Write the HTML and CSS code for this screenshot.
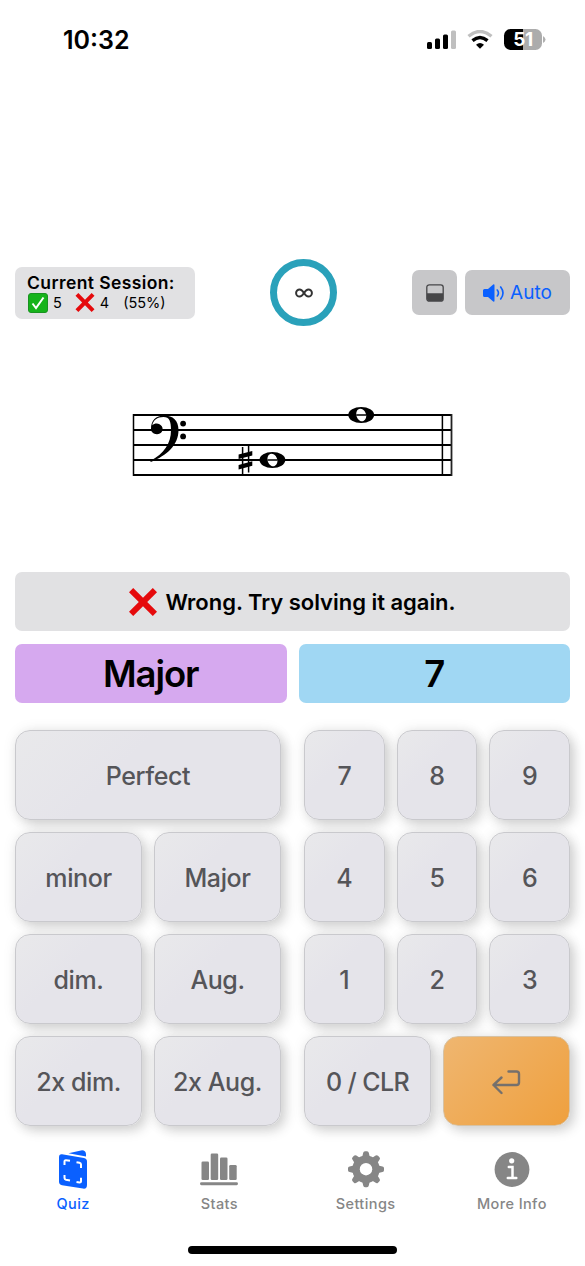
FILE: index.html
```
<!DOCTYPE html>
<html lang="en">
<head>
<meta charset="utf-8">
<title>Interval Quiz</title>
<link rel="stylesheet" href="styles.css">
</head>
<body>
<svg width="0" height="0" class="defs">
  <symbol id="cross" viewBox="0 0 28 28"><path d="M4.2 0 14 9.8 23.8 0 28 4.2 18.2 14 28 23.8 23.8 28 14 18.2 4.2 28 0 23.8 9.8 14 0 4.2z" fill="#e50a0c"/></symbol>
</svg>
<header class="status">
  <span class="time">10:32</span>
  <div class="indicators">
    <svg class="signal" width="30" height="20" viewBox="0 0 30 20">
      <rect x="0" y="12" width="5" height="7" rx="1.5"/><rect x="8" y="8.500" width="5" height="10.500" rx="1.500"/><rect x="16" y="4.500" width="5" height="14.500" rx="1.500"/><rect x="24" y="0.500" width="5" height="18.500" rx="1.500" fill="#bfbfbf"/>
    </svg>
    <svg class="wifi" width="26" height="20" viewBox="0 0 26 20">
      <path d="M1.500 6.300Q13-3.400 24.500 6.300" fill="none" stroke="#bfbfbf" stroke-width="3.300"/>
      <path d="M5.500 10.600Q13 4.400 20.500 10.600" fill="none" stroke="#000" stroke-width="3.400"/>
      <path d="M9 14.700Q13 11.300 17 14.700L13 18.800z"/>
    </svg>
    <div class="battery"><span>51</span></div>
    <svg class="battery-tip" width="3" height="7" viewBox="0 0 3 7"><path d="M0 0Q2.500 1.500 2.500 3.500T0 7z" fill="#b0b0b0"/></svg>
  </div>
</header>

<section class="toolbar">
  <div class="session">
    <strong>Current Session:</strong>
    <div class="scores">
      <svg class="check" width="20" height="20" viewBox="0 0 20 20"><rect x=".5" y=".5" width="19" height="19" rx="2.500" fill="#16b31b" stroke="#199321"/><path d="M4.500 10.500 8 15 15.500 4.500" fill="none" stroke="#fff" stroke-width="2"/></svg>
      <span class="right-count">5</span>
      <svg width="20" height="19"><use href="#cross"/></svg>
      <span class="wrong-count">4</span>
      <span class="ratio">(55%)</span>
    </div>
  </div>
  <div class="ring">
    <svg width="18" height="10" viewBox="0 0 18 10"><path d="M9 5C7.600 2.800 6.500 1.400 4.700 1.400a3.600 3.600 0 0 0 0 7.200C6.500 8.600 7.600 7.200 9 5s2.500-3.600 4.300-3.600a3.600 3.600 0 0 1 0 7.200C11.500 8.600 10.400 7.200 9 5z" fill="none" stroke="#333" stroke-width="2"/></svg>
  </div>
  <div class="tools">
    <button class="tool square" aria-label="Layout"><svg width="18" height="18" viewBox="0 0 18 18"><rect x=".8" y=".8" width="16.400" height="16.400" rx="2.500" fill="none" stroke="#464648" stroke-width="1.300"/><path d="M1 9.200h16V15q0 2-2 2H3q-2 0-2-2z" fill="#464648"/></svg></button>
    <button class="tool audio"><svg width="22" height="18" viewBox="0 0 22 18"><path d="M1.500 5H5l5.200-4.500Q11.500 0 11.500 1.200v15.600q0 1.200-1.300.7L5 13H1.500Q0 13 0 11.500v-5Q0 5 1.500 5z" fill="#0a60ff"/><path d="M14.300 6q2.300 3 0 6M17.700 3q4.600 6 0 12" fill="none" stroke="#0a60ff" stroke-width="1.600" stroke-linecap="round"/></svg><span>Auto</span></button>
  </div>
</section>

<svg class="staff" width="322" height="76" viewBox="132 405 322 76">
  <path d="M133 415H452M133 430H452M133 445H452M133 460H452M133 475H452" stroke="#000" stroke-width="1.900"/>
  <path d="M133.500 414v62M442.400 414v62" stroke="#000" stroke-width="1.500"/>
  <path d="M451.500 414v62" stroke="#222" stroke-width="1.800"/>
  <path d="M151 429C150.800 420.500 156 415.400 164 415.400C173 415.400 178.500 420.500 178.500 430C178.500 445 167 455.500 150.800 462L150.300 461C164 453.500 171 443.500 171 430C171 421.500 169.500 417 163.500 417C157 417 153.500 420 152.300 425.200C154 423.600 157.200 423 159.500 424.300C162.500 425.800 163.400 429.200 162 431.600C160.300 434.500 156.500 435 153.800 433.500C151.800 432.400 151 431 151 429z"/>
  <circle cx="183.100" cy="423.600" r="2.900"/><circle cx="183.100" cy="436.400" r="2.900"/>
  <path d="M242.600 447v27M248.600 445.800v26.700" stroke="#000" stroke-width="1.500"/>
  <path d="M238.600 454.500l13.700-3.600v4.500l-13.700 3.600zM238.600 464.900l13.700-3.600v4.500l-13.700 3.600z"/>
  <g id="whole-note">
    <ellipse cx="272.400" cy="460" rx="12.900" ry="8"/>
    <ellipse cx="272.400" cy="460" rx="4.800" ry="6.400" fill="#fff" transform="rotate(-20 272.400 460)"/>
  </g>
  <use href="#whole-note" x="88.800" y="-45"/>
  <path d="M267.500 460h10M356.300 415h10" stroke="#000" stroke-width="1.600"/>
</svg>

<main>
  <div class="message"><svg width="28" height="28"><use href="#cross"/></svg><span>Wrong. Try solving it again.</span></div>
  <div class="answers"><div class="answer quality">Major</div><div class="answer number">7</div></div>
  <div class="keypad">
    <div class="qualities">
      <button class="key wide">Perfect</button>
      <button class="key">minor</button><button class="key">Major</button>
      <button class="key">dim.</button><button class="key">Aug.</button>
      <button class="key">2x dim.</button><button class="key">2x Aug.</button>
    </div>
    <div class="numbers">
      <button class="key">7</button><button class="key">8</button><button class="key">9</button>
      <button class="key">4</button><button class="key">5</button><button class="key">6</button>
      <button class="key">1</button><button class="key">2</button><button class="key">3</button>
      <button class="key clear">0 / CLR</button>
      <button class="key enter" aria-label="Enter"><svg width="29" height="25" viewBox="0 0 29 25" fill="none" stroke="#75706c" stroke-width="2.400" stroke-linecap="round" stroke-linejoin="round"><path d="M16.500 1.500h8Q27 1.500 27 4v8.500Q27 15 24.500 15H1.500M9.500 7.500 1.500 15l8 8"/></svg></button>
    </div>
  </div>
</main>

<nav class="tabs">
  <a class="tab active"><svg width="30" height="40" viewBox="0 0 30 40">
    <path d="M10.500 3.200 23 .4Q27.500-.2 28 4v2.600z" fill="currentColor"/>
    <path d="M4 4.300 26 8q3 .6 3 3.500V35q0 4.200-4 3.600L4 35.300Q1 34.800 1 31.500V7.200Q1 4 4 4.300z" fill="currentColor"/>
    <path d="M6.500 15v-3.500q0-1.500 1.500-1.300l4 .6M18.500 12.200l3 .6q1.500.3 1.500 1.800V18M6.500 25v3q0 1.400 1.500 1.700l4 .7M18.500 32l3 .5q1.500.2 1.500-1.200v-3.500" fill="none" stroke="#fff" stroke-width="2"/>
  </svg><span>Quiz</span></a>
  <a class="tab"><svg width="38" height="40" viewBox="0 0 38 40" fill="currentColor"><rect x="1.500" y="11.500" width="7.500" height="18.500" rx="1.300"/><rect x="10.700" y="3.500" width="7.500" height="26.500" rx="1.300"/><rect x="20" y="7.500" width="7.500" height="22.500" rx="1.300"/><rect x="29.200" y="15" width="7.500" height="15" rx="1.300"/><rect y="32.300" width="38" height="2.900" rx="1.450"/></svg><span>Stats</span></a>
  <a class="tab"><svg width="38" height="40" viewBox="0 0 38 40" fill="currentColor">
    <g id="teeth"><path id="tooth" d="M15 8 16.200 2.700Q16.500 1.200 18 1.200h2q1.500 0 1.800 1.500L23 8v22.500l-1.200 5.100q-.3 1.600-1.800 1.600h-2q-1.500 0-1.800-1.600L15 30.500z"/><use href="#tooth" transform="rotate(45 19 19.200)"/></g>
    <use href="#teeth" transform="rotate(90 19 19.200)"/><circle cx="19" cy="19.200" r="13.700"/><circle cx="19" cy="19.200" r="6.200" fill="#fff"/></svg><span>Settings</span></a>
  <a class="tab"><svg width="36" height="40" viewBox="0 0 36 40"><circle cx="18" cy="19.500" r="17.400" fill="currentColor"/><circle cx="17.700" cy="10.800" r="2.600" fill="#fff"/><path d="M14.800 17h3.700v11M13.800 28h8.500" fill="none" stroke="#fff" stroke-width="2.500" stroke-linecap="round"/></svg><span>More Info</span></a>
</nav>
<div class="home-indicator"></div>
</body>
</html>
```
FILE: styles.css
```
* { box-sizing: border-box; }
body {
  width: 585px; height: 1266px; margin: 0; overflow: hidden;
  display: flex; flex-direction: column;
  background: #fff; color: #000;
  font-family: Inter, "Liberation Sans", sans-serif;
}
button { border: 0; padding: 0; font: inherit; color: inherit; }
svg { display: block; flex: none; }
.defs { position: absolute; }

.status { height: 79px; padding: 0 39px 0 63px; display: flex; align-items: center; justify-content: space-between; }
.time { font-size: 25px; font-weight: 600; letter-spacing: 0; }
.indicators { display: flex; align-items: center; }
.wifi { margin-left: 10px; }
.battery { width: 38px; height: 21px; margin-left: 11px; border-radius: 6.500px; background: linear-gradient(90deg, #000 51%, #acacac 51%); color: #fff; font-size: 19px; line-height: 21px; font-weight: 700; text-align: center; letter-spacing: -.5px; }
.battery-tip { margin-left: 1px; }

.toolbar { height: 67px; margin: 180px 15px 0; display: flex; align-items: center; justify-content: space-between; }
.session { width: 180px; height: 52px; border-radius: 7px; background: #e1e1e3; padding: 6px 12px 0; }
.session strong { display: block; font-size: 17.500px; line-height: 20px; font-weight: 600; letter-spacing: .4px; white-space: nowrap; }
.scores { height: 20px; padding-left: 1px; display: flex; align-items: center; font-size: 14.500px; white-space: nowrap; }
.right-count { margin: 0 13px 0 5px; }
.wrong-count { margin: 0 14px 0 5px; }
.ring { width: 67px; height: 67px; border: 7.500px solid #2aa1ba; border-radius: 50%; display: flex; align-items: center; justify-content: center; }
.tools { display: flex; gap: 8px; }
.tool { height: 45px; border-radius: 7px; background: #c7c7c9; display: flex; align-items: center; justify-content: center; }
.square { width: 45px; }
.audio { width: 105px; gap: 5px; color: #0a60ff; font-size: 19px; }

.staff { margin: 79px 0 0 132px; }

main { margin: 91px 15px 0; }
.message { height: 59px; border-radius: 7px; background: #e1e1e3; display: flex; align-items: center; justify-content: center; gap: 8px; font-size: 22px; font-weight: 600; letter-spacing: -.02px; }
.answers { margin-top: 13px; display: grid; grid-template-columns: 1fr 1fr; gap: 12px; }
.answer { height: 59px; border-radius: 7px; display: flex; align-items: center; justify-content: center; font-size: 36.500px; font-weight: 600; letter-spacing: -1.100px; }
.quality { background: #d6a9ef; }
.number { background: #a0d7f3; }
.keypad { margin-top: 27px; display: flex; justify-content: space-between; }
.qualities, .numbers { width: 266px; display: grid; grid-auto-rows: 90px; gap: 12px; }
.qualities { grid-template-columns: repeat(2, 1fr); }
.numbers { grid-template-columns: repeat(6, 1fr); }
.numbers .key { grid-column: span 2; }
.numbers .clear, .numbers .enter { grid-column: span 3; }
.qualities .wide { grid-column: span 2; }
.key { padding-top: 2px; border: 1px solid #c9c9cd; border-radius: 15px; background: linear-gradient(135deg, #e9e9eb, #e5e4ea 40%, #e5e4ea); color: #555559; font-size: 25px; font-weight: 500; letter-spacing: -.4px; display: flex; align-items: center; justify-content: center; box-shadow: 5px 5px 12px rgba(0,0,0,.15), 0 0 14px rgba(0,0,0,.08); }
.numbers .clear { letter-spacing: -.600px; }
.enter { background: linear-gradient(135deg, #efb670, #efa03e); border-color: #d6c2a5; }

.tabs { margin-top: 24px; display: grid; grid-template-columns: repeat(4, 1fr); }
.tab { height: 64px; display: flex; flex-direction: column; align-items: center; color: #868686; font-size: 14.500px; font-weight: 500; letter-spacing: .4px; }
.tab span { margin-top: 5px; line-height: 18px; }
.active { color: #0a60ff; }
.home-indicator { width: 209px; height: 8px; margin: 32px auto 0; border-radius: 4px; background: #000; }
```
